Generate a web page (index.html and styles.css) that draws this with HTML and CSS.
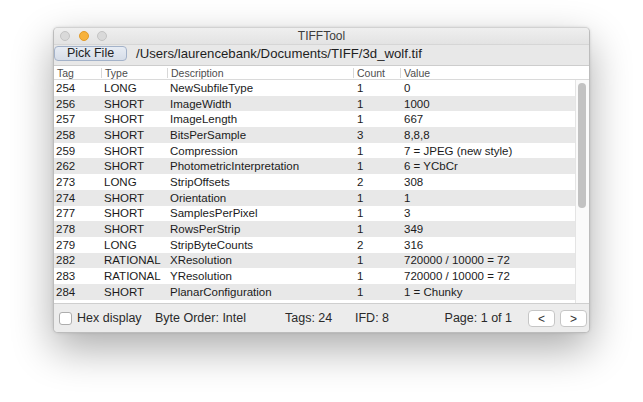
FILE: index.html
```html
<!DOCTYPE html>
<html>
<head>
<meta charset="utf-8">
<title>TIFFTool</title>
<link rel="stylesheet" href="styles.css">
</head>
<body>
<div class="stage">
  <div class="window">
    <div class="titlebar">
      <div class="lights">
        <span class="light grey"></span>
        <span class="light orange"></span>
        <span class="light grey"></span>
      </div>
      <div class="title">TIFFTool</div>
      <div></div>
    </div>
    <div class="toolbar">
      <button class="pick">Pick File</button>
      <span class="path">/Users/laurencebank/Documents/TIFF/3d_wolf.tif</span>
    </div>
    <div class="thead">
      <div class="h">Tag</div>
      <div class="h sep">Type</div>
      <div class="h sep">Description</div>
      <div class="h sep">Count</div>
      <div class="h sep">Value</div>
    </div>
    <div class="tbody">
      <div class="rows">
        <div class="row"><span>254</span><span>LONG</span><span>NewSubfileType</span><span>1</span><span>0</span></div>
        <div class="row"><span>256</span><span>SHORT</span><span>ImageWidth</span><span>1</span><span>1000</span></div>
        <div class="row"><span>257</span><span>SHORT</span><span>ImageLength</span><span>1</span><span>667</span></div>
        <div class="row"><span>258</span><span>SHORT</span><span>BitsPerSample</span><span>3</span><span>8,8,8</span></div>
        <div class="row"><span>259</span><span>SHORT</span><span>Compression</span><span>1</span><span>7 = JPEG (new style)</span></div>
        <div class="row"><span>262</span><span>SHORT</span><span>PhotometricInterpretation</span><span>1</span><span>6 = YCbCr</span></div>
        <div class="row"><span>273</span><span>LONG</span><span>StripOffsets</span><span>2</span><span>308</span></div>
        <div class="row"><span>274</span><span>SHORT</span><span>Orientation</span><span>1</span><span>1</span></div>
        <div class="row"><span>277</span><span>SHORT</span><span>SamplesPerPixel</span><span>1</span><span>3</span></div>
        <div class="row"><span>278</span><span>SHORT</span><span>RowsPerStrip</span><span>1</span><span>349</span></div>
        <div class="row"><span>279</span><span>LONG</span><span>StripByteCounts</span><span>2</span><span>316</span></div>
        <div class="row"><span>282</span><span>RATIONAL</span><span>XResolution</span><span>1</span><span>720000 / 10000 = 72</span></div>
        <div class="row"><span>283</span><span>RATIONAL</span><span>YResolution</span><span>1</span><span>720000 / 10000 = 72</span></div>
        <div class="row"><span>284</span><span>SHORT</span><span>PlanarConfiguration</span><span>1</span><span>1 = Chunky</span></div>
      </div>
      <div class="scroll"><div class="thumb"></div></div>
    </div>
    <div class="footer">
      <label class="hex"><span class="check"></span>Hex display</label>
      <span class="byte">Byte Order: Intel</span>
      <span class="tags">Tags: 24</span>
      <span class="ifd">IFD: 8</span>
      <span class="page">Page: 1 of 1</span>
      <button class="nav">&lt;</button>
      <button class="nav">&gt;</button>
    </div>
  </div>
</div>
</body>
</html>
```

FILE: styles.css
```css
* { box-sizing: border-box; }
html, body {
  margin: 0;
  padding: 0;
  background: #ffffff;
}
body {
  font-family: "Liberation Sans", Arial, sans-serif;
  color: #1b1b1b;
  width: 643px;
  height: 402px;
  overflow: hidden;
}
.stage {
  padding: 27px 0 0 53px;
}
.window {
  width: 537px;
  height: 306px;
  border: 1px solid #bcbcbc;
  border-top-color: #d2d2d2;
  border-radius: 5px;
  overflow: hidden;
  background: #ebebeb;
  box-shadow: 0 16px 42px rgba(0, 0, 0, 0.33), 0 0 3px rgba(0, 0, 0, 0.12);
  display: flex;
  flex-direction: column;
}
.titlebar {
  height: 17px;
  flex: none;
  display: grid;
  grid-template-columns: 1fr auto 1fr;
  align-items: center;
  background: linear-gradient(#efefef, #e3e3e3);
  border-bottom: 1px solid #d6d6d6;
}
.lights {
  display: flex;
  gap: 8.5px;
  padding-left: 6px;
}
.light {
  width: 10px;
  height: 10px;
  border-radius: 50%;
  display: block;
}
.light.grey {
  background: #d9d9d9;
  border: 1px solid #c3c3c3;
}
.light.orange {
  background: #f7b23c;
  border: 1px solid #e19b2a;
}
.title {
  font-size: 12px;
  color: #3c3c3c;
  line-height: 16px;
}
.toolbar {
  height: 21px;
  flex: none;
  display: flex;
  align-items: flex-start;
  background: #e8e8e8;
  border-bottom: 1px solid #cdcdcd;
}
.pick {
  margin: 1px 0 0 0;
  width: 73px;
  height: 15px;
  padding: 0;
  font-family: "Liberation Sans", Arial, sans-serif;
  font-size: 12.5px;
  line-height: 13px;
  color: #222;
  background: linear-gradient(#e7ecf4, #d6dde8);
  border: 1px solid #a3b2c9;
  border-radius: 4px;
}
.path {
  margin-left: 9px;
  font-size: 13.2px;
  line-height: 15px;
  margin-top: 1px;
  color: #1e1e1e;
}
.thead {
  height: 14px;
  flex: none;
  display: grid;
  grid-template-columns: 47px 66px 186px 47px 1fr;
  background: #ffffff;
  border-bottom: 1px solid #dadada;
}
.h {
  font-size: 10.5px;
  color: #4d4d4d;
  height: 10px;
  line-height: 10px;
  margin-top: 2px;
  padding-left: 3px;
  white-space: nowrap;
}
.h.sep {
  border-left: 1px solid #d8d8d8;
  padding-left: 3px;
}
.tbody {
  height: 224px;
  flex: none;
  display: flex;
  background: #ffffff;
  border-bottom: 1px solid #cfcfcf;
}
.rows {
  width: 521px;
  flex: none;
}
.row {
  height: 15.7px;
  display: grid;
  grid-template-columns: 47px 66px 186px 47px 1fr;
  align-items: center;
  font-size: 11.5px;
  line-height: 14px;
  white-space: nowrap;
}
.row:nth-child(even) {
  background: #e8e8e8;
}
.row span {
  padding-left: 2px;
}
.row span:nth-child(2),
.row span:nth-child(3) {
  padding-left: 3px;
}
.row span:nth-child(4),
.row span:nth-child(5) {
  padding-left: 4px;
}
.scroll {
  flex: 1;
  background: #fafafa;
  border-left: 1px solid #e4e4e4;
  padding: 3px 0 0 2px;
}
.thumb {
  width: 8px;
  height: 125px;
  border-radius: 4px;
  background: #c2c2c2;
}
.footer {
  flex: 1;
  display: flex;
  align-items: center;
  padding-left: 5px;
  font-size: 12.5px;
  color: #2a2a2a;
  background: #ececec;
}
.hex {
  width: 96px;
  display: flex;
  align-items: center;
}
.check {
  width: 13px;
  height: 13px;
  margin-right: 5px;
  background: #ffffff;
  border: 1px solid #adadad;
  border-radius: 3px;
}
.byte {
  width: 130px;
}
.tags {
  width: 70px;
}
.ifd {
  flex: 1;
}
.page {
  margin-right: 16px;
}
.nav {
  width: 27px;
  height: 17px;
  padding: 0;
  margin: 1px 5px 0 0;
  font-family: "Liberation Sans", Arial, sans-serif;
  font-size: 12px;
  line-height: 14px;
  color: #333;
  background: #ffffff;
  border: 1px solid #c6c6c6;
  border-radius: 4px;
}
.nav:last-child {
  margin-right: 2px;
}
```
